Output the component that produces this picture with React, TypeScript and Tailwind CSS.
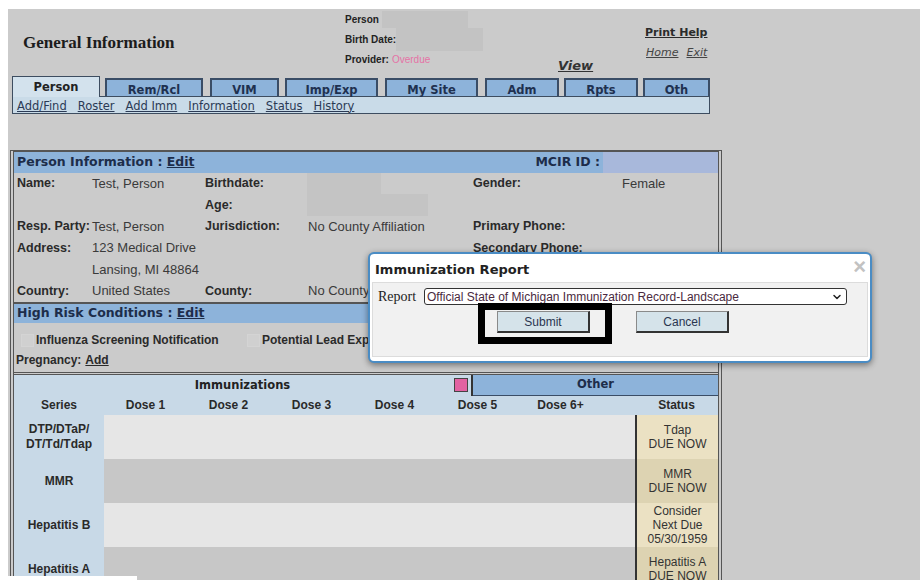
import React from 'react';
import { ChevronDown } from 'lucide-react';

const verd = "font-['DejaVu_Sans',Verdana,sans-serif]";
const arial = "font-['Liberation_Sans',Arial,sans-serif]";
const serif = "font-['Liberation_Serif','Times_New_Roman',serif]";

const tabs = [
  { label: 'Person', cls: 'w-[88px]', active: true },
  { label: 'Rem/Rcl', cls: 'w-[98px] ml-[5px]' },
  { label: 'VIM', cls: 'w-[69px] ml-[7px]' },
  { label: 'Imp/Exp', cls: 'w-[93px] ml-[6px]' },
  { label: 'My Site', cls: 'w-[93px] ml-[7px]' },
  { label: 'Adm', cls: 'w-[74px] ml-[7px]' },
  { label: 'Rpts', cls: 'w-[74px] ml-[5px]' },
  { label: 'Oth', cls: 'w-[67px] ml-[5px]' },
];

const subLinks = ['Add/Find', 'Roster', 'Add Imm', 'Information', 'Status', 'History'];

const doses = ['Dose 1', 'Dose 2', 'Dose 3', 'Dose 4', 'Dose 5', 'Dose 6+'];

const series = [
  { name: ['DTP/DTaP/', 'DT/Td/Tdap'], status: ['Tdap', 'DUE NOW'] },
  { name: ['MMR'], status: ['MMR', 'DUE NOW'] },
  { name: ['Hepatitis B'], status: ['Consider', 'Next Due', '05/30/1959'] },
  { name: ['Hepatitis A'], status: ['Hepatitis A', 'DUE NOW'] },
];

function Label({ children }: { children: React.ReactNode }) {
  return <div className={`${arial} font-bold text-[12.5px] text-[#2a2a2a] flex items-center whitespace-nowrap`}>{children}</div>;
}

function Value({ children }: { children?: React.ReactNode }) {
  return <div className={`${arial} text-[13px] text-[#3a3a3a] flex items-center whitespace-nowrap`}>{children}</div>;
}

export default function App() {
  return (
    <div className="w-[920px] h-[580px] bg-white overflow-hidden">
      <div className="ml-[8px] mt-[9px] w-[912px] h-[571px] bg-[#cbcbcb] relative overflow-hidden">
        {/* page header */}
        <div className="flex h-[67px]">
          <div className="w-[337px] pl-[15px] pt-[24px]">
            <div className={`${serif} font-bold text-[17px] leading-[20px] text-[#1c1c1c]`}>General Information</div>
          </div>
          <div className={`w-[213px] ${arial} text-[10px] text-[#222]`}>
            <div className="h-[20px] flex items-center">
              <span className="font-bold">Person</span>
              <span className="ml-[3px] w-[86px] h-[17px] bg-[#c3c3c3]" />
            </div>
            <div className="h-[20px] flex items-center">
              <span className="font-bold">Birth Date:</span>
              <span className="w-[87px] h-[23px] bg-[#c3c3c3]" />
            </div>
            <div className="h-[20px] flex items-center">
              <span className="font-bold">Provider:</span>
              <span className="ml-[3px] text-[#e573a6]">Overdue</span>
            </div>
          </div>
          <div className="w-[87px] pt-[43px]">
            <span className={`${verd} font-bold italic underline text-[13px] leading-[16px] text-[#333]`}>View</span>
          </div>
          <div className={`${verd} pt-[16px]`}>
            <div className="font-bold underline text-[11px] text-[#2a2a2a] h-[16px] leading-[16px]">Print Help</div>
            <div className="flex gap-[8px] italic underline text-[11px] text-[#444] mt-[4px] leading-[16px] pl-[1px]">
              <span>Home</span>
              <span>Exit</span>
            </div>
          </div>
        </div>

        {/* tab strip */}
        <div className="ml-[4px] w-[698px]">
          <div className="flex items-end h-[20px]">
            {tabs.map((t) =>
              t.active ? (
                <div
                  key={t.label}
                  className={`${t.cls} h-[21px] -mb-px relative z-10 bg-[#d3e2ed] border border-b-0 border-[#3d4d60] flex justify-center pt-[2px] ${verd} font-bold text-[11.5px] text-[#222]`}
                >
                  {t.label}
                </div>
              ) : (
                <div
                  key={t.label}
                  className={`${t.cls} h-[18px] bg-[#8db3da] border-[2px] border-b-0 border-[#3a4d66] flex justify-center pt-[3px] ${verd} font-bold text-[11.5px] leading-[14px] text-[#1f3150]`}
                >
                  {t.label}
                </div>
              ),
            )}
          </div>
          <div className="h-[18px] bg-[#c9dbe8] border border-[#3d4d60] flex items-center pl-[4px] pt-[1px] gap-[11px]">
            {subLinks.map((l) => (
              <span key={l} className={`${verd} text-[11.5px] underline text-[#2b3a55] leading-[14px]`}>
                {l}
              </span>
            ))}
          </div>
        </div>

        {/* person record */}
        <div className="mt-[36px] ml-[2px] w-[712px] border-t-2 border-l-[4px] border-r-[4px] border-double border-[#555]">
          <div className="flex h-[21px]">
            <div className={`w-[589px] bg-[#8db3da] flex items-center justify-between pl-[3px] pr-[3px] ${verd} font-bold text-[12.5px] text-[#1d2d4a]`}>
              <span>
                Person Information : <span className="underline">Edit</span>
              </span>
              <span>MCIR ID :</span>
            </div>
            <div className="flex-1 bg-[#a8b8db]" />
          </div>

          <div className="grid grid-cols-[75px_113px_103px_165px_149px_1fr] grid-rows-[21px_22px_21px_22px_21px_22px] pl-[3px]">
            <Label>Name:</Label>
            <Value>Test, Person</Value>
            <Label>Birthdate:</Label>
            <div className="flex items-start -ml-[1px]">
              <span className="w-[74px] h-[21px] bg-[#c4c4c4]" />
            </div>
            <Label>Gender:</Label>
            <Value>Female</Value>

            <div />
            <div />
            <Label>Age:</Label>
            <div className="flex items-start -ml-[1px]">
              <span className="w-[121px] h-[22px] bg-[#c4c4c4]" />
            </div>
            <div />
            <div />

            <Label>Resp. Party:</Label>
            <Value>Test, Person</Value>
            <Label>Jurisdiction:</Label>
            <Value>No County Affiliation</Value>
            <Label>Primary Phone:</Label>
            <div />

            <Label>Address:</Label>
            <Value>123 Medical Drive</Value>
            <div />
            <div />
            <Label>Secondary Phone:</Label>
            <div />

            <div />
            <Value>Lansing, MI 48864</Value>
            <div />
            <div />
            <div />
            <div />

            <Label>Country:</Label>
            <Value>United States</Value>
            <Label>County:</Label>
            <Value>No County Affiliation</Value>
            <div />
            <div />
          </div>

          <div className="border-t-2 border-[#555] h-[21px] bg-[#8db3da] flex items-center pl-[3px]">
            <span className={`${verd} font-bold text-[12.5px] text-[#1d2d4a]`}>
              High Risk Conditions : <span className="underline">Edit</span>
            </span>
          </div>
          <div className="pt-[7px] pl-[7px]">
            <div className={`h-[20px] flex items-center ${arial} font-bold text-[12px] text-[#2a2a2a]`}>
              <span className="w-[13px] h-[13px] border border-[#d4d4d4] bg-[#d0d0d0]" />
              <span className="ml-[2px] w-[211px]">Influenza Screening Notification</span>
              <span className="w-[13px] h-[13px] border border-[#d4d4d4] bg-[#d0d0d0]" />
              <span className="ml-[2px]">Potential Lead Exposure</span>
            </div>
            <div className={`h-[20px] flex items-center -ml-[5px] ${arial} font-bold text-[12px] text-[#2a2a2a]`}>
              Pregnancy:<span className="ml-[4px] underline">Add</span>
            </div>
          </div>

          {/* immunization grid */}
          <div className="mt-[2px] border-t-[3px] border-double border-[#555]">
            <div className="flex h-[21px] bg-[#c8d9e7]">
              <div className="w-[457px] relative flex items-center justify-center">
                <span className={`${verd} font-bold text-[11.5px] text-[#222]`}>Immunizations</span>
                <span className="absolute right-[3px] top-[3px] w-[14px] h-[14px] bg-[#e262a2] border border-[#444]" />
              </div>
              <div className="w-[2px] bg-[#333]" />
              <div className="flex-1 bg-[#8db3da] border-b border-[#3a4d66] flex items-center justify-center">
                <span className={`${verd} font-bold text-[11.5px] text-[#1d2d4a]`}>Other</span>
              </div>
            </div>
            <div className={`flex h-[19px] bg-[#c8d9e7] ${arial} font-bold text-[12px] text-[#2a2a2a]`}>
              <div className="w-[90px] text-center leading-[19px]">Series</div>
              {doses.map((d) => (
                <div key={d} className="w-[83px] text-center leading-[19px]">
                  {d}
                </div>
              ))}
              <div className="w-[33px]" />
              <div className="flex-1 text-center leading-[19px]">Status</div>
            </div>
            {series.map((s, i) => (
              <div key={i} className="flex h-[44px]">
                <div className={`w-[90px] bg-[#c8d9e7] flex flex-col items-center justify-center ${arial} font-bold text-[12px] leading-[15px] text-[#2a2a2a]`}>
                  {s.name.map((n) => (
                    <span key={n}>{n}</span>
                  ))}
                </div>
                <div className={`w-[531px] ${i % 2 === 0 ? 'bg-[#e6e6e6]' : 'bg-[#c7c7c7]'}`} />
                <div className="w-[2px] bg-[#333]" />
                <div
                  className={`flex-1 flex flex-col items-center justify-center ${i % 2 === 0 ? 'bg-[#ebe1c3]' : 'bg-[#ddd3b2]'} ${arial} text-[12px] leading-[14px] text-[#333]`}
                >
                  {s.status.map((n) => (
                    <span key={n}>{n}</span>
                  ))}
                </div>
              </div>
            ))}
          </div>
        </div>

        <div className="absolute left-0 bottom-0 w-[129px] h-[4px] bg-white" />

        {/* report dialog */}
        <div className="absolute left-[360px] top-[243px] w-[504px] h-[111px] bg-white border-2 border-[#4a8cc4] rounded-[6px] shadow-[0_2px_6px_rgba(0,0,0,0.45)] z-20">
          <div className="h-[28px] flex items-center justify-between pl-[5px] pr-[4px]">
            <span className={`${verd} font-bold text-[13px] text-[#222] mt-[4px]`}>Immunization Report</span>
            <span className={`${arial} font-bold text-[22px] text-[#c2c2c2] leading-none -mt-[2px]`}>×</span>
          </div>
          <div className="mx-[2px] h-[75px] bg-[#f1f1f1] border border-[#dcdcdc] relative">
            <div className="flex items-center h-[17px] mt-[5px] pl-[5px]">
              <span className={`${serif} text-[14px] leading-[17px] text-[#222] w-[46px]`}>Report</span>
              <div className="w-[423px] h-[17px] bg-white border-[1.5px] border-[#333] rounded-[3px] flex items-center justify-between pl-[2px] pr-[3px]">
                <span className={`${arial} text-[12px] text-[#4a2a40] leading-[14px]`}>
                  Official State of Michigan Immunization Record-Landscape
                </span>
                <ChevronDown size={12} strokeWidth={3} className="text-[#222]" />
              </div>
            </div>
            <div className="flex mt-[6px] pl-[124px] gap-[46px]">
              <div className={`w-[93px] h-[22px] bg-[#d5e3ea] border border-[#8a8a8a] border-r-2 border-b-2 border-r-[#333] border-b-[#333] flex items-center justify-center ${arial} text-[12px] text-[#2a3550]`}>
                Submit
              </div>
              <div className={`w-[93px] h-[22px] bg-[#d5e3ea] border border-[#8a8a8a] border-r-2 border-b-2 border-r-[#333] border-b-[#333] flex items-center justify-center ${arial} text-[12px] text-[#2a3550]`}>
                Cancel
              </div>
            </div>
            <div className="absolute left-[105px] top-[20px] w-[134px] h-[41px] border-[7px] border-black" />
          </div>
        </div>
      </div>
    </div>
  );
}
